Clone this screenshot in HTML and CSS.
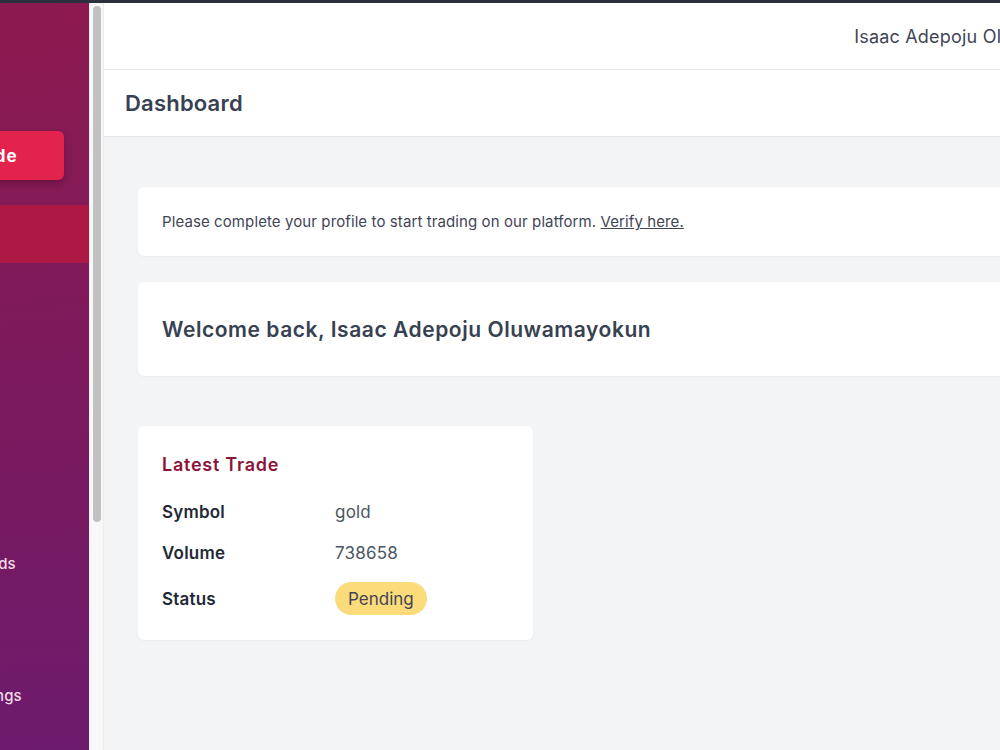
FILE: index.html
```html
<!DOCTYPE html>
<html lang="en">
<head>
<meta charset="utf-8">
<title>Dashboard</title>
<link rel="stylesheet" href="styles.css">
</head>
<body>
<div class="topline"></div>
<div class="app">
  <aside class="sidebar">
    <div class="sidebar-inner">
      <div class="brand-space"></div>
      <div class="trade-btn">Place Trade</div>
      <nav class="nav">
        <div class="nav-item active"></div>
        <div class="nav-item"></div>
        <div class="nav-item"></div>
        <div class="nav-item"></div>
        <div class="nav-item"></div>
        <div class="nav-item"></div>
        <div class="nav-item"></div>
        <div class="nav-item"><span>Withdraw Funds</span></div>
        <div class="nav-item"></div>
        <div class="nav-item"></div>
        <div class="nav-item"><span>Account Settings</span></div>
      </nav>
    </div>
  </aside>
  <div class="scrolltrack"><div class="thumb"></div></div>
  <main class="main">
    <header class="topbar"><span class="user">Isaac Adepoju Oluwamayokun</span></header>
    <div class="titlebar"><h1>Dashboard</h1></div>
    <div class="content">
      <div class="card notice">Please complete your profile to start trading on our platform. <a href="#">Verify here.</a></div>
      <div class="card welcome"><h2>Welcome back, Isaac Adepoju Oluwamayokun</h2></div>
      <div class="card trade">
        <h3>Latest Trade</h3>
        <div class="row"><span class="label">Symbol</span><span class="value">gold</span></div>
        <div class="row"><span class="label">Volume</span><span class="value">738658</span></div>
        <div class="row status"><span class="label">Status</span><span class="badge">Pending</span></div>
      </div>
    </div>
  </main>
</div>
</body>
</html>
```
FILE: styles.css
```css
* { box-sizing: border-box; }
html, body { margin: 0; padding: 0; }
body {
  width: 1000px;
  height: 750px;
  overflow: hidden;
  font-family: "Inter", "Open Sans", sans-serif;
  color: #374151;
  background: #f3f4f6;
}
.topline { height: 3px; background: #2c2f3e; }
.app { display: flex; height: 747px; }

.sidebar {
  flex: none;
  width: 89px;
  overflow: hidden;
  display: flex;
  justify-content: flex-end;
  background: linear-gradient(175deg, #8d1a4f 0%, #7c1a5d 50%, #6d1b6d 100%);
}
.sidebar-inner { flex: none; width: 250px; }
.brand-space { height: 128px; }
.trade-btn {
  margin: 0 25px 0 24px;
  height: 49px;
  display: flex;
  align-items: center;
  justify-content: center;
  background: #e2234d;
  color: #fff;
  font-weight: 700;
  font-size: 17px;
  letter-spacing: 1px;
  border-radius: 6px;
  box-shadow: 0 3px 6px rgba(60, 0, 30, 0.35);
}
.nav { margin-top: 25px; }
.nav-item {
  height: 44px;
  display: flex;
  align-items: center;
  padding-left: 60px;
  color: #f1d9e8;
  font-size: 15px;
  font-weight: 500;
  white-space: nowrap;
}
.nav-item.active { height: 58px; background: #ad1944; margin-bottom: 14px; }

.scrolltrack {
  flex: none;
  width: 15px;
  background: #f8f8f8;
  border-left: 1px solid #eee;
  border-right: 1px solid #ececec;
  padding: 3px 2px 0 3px;
}
.thumb { width: 8px; height: 516px; border-radius: 4px; background: #c1c1c1; }

.main { flex: none; width: 1140px; display: flex; flex-direction: column; }
.topbar {
  height: 67px;
  background: #fff;
  border-bottom: 1px solid #e5e7eb;
  display: flex;
  align-items: center;
  justify-content: flex-end;
  padding-right: 128px;
}
.user { font-size: 18px; letter-spacing: 0.2px; color: #3f4556; white-space: nowrap; }
.titlebar {
  height: 67px;
  background: #fff;
  border-bottom: 1px solid #e6e7ea;
  display: flex;
  align-items: center;
  padding-left: 21px;
}
.titlebar h1 { margin: 0; font-size: 22px; font-weight: 600; color: #374151; letter-spacing: 0.2px; }

.content { padding: 50px 0 0 34px; display: flex; flex-direction: column; align-items: flex-start; }
.card { background: #fff; border-radius: 6px; box-shadow: 0 1px 2px rgba(0,0,0,0.04); }
.notice {
  width: 1000px;
  height: 69px;
  display: flex;
  align-items: center;
  padding-left: 24px;
  font-size: 15px;
  letter-spacing: 0.1px;
  color: #3f4556;
  white-space: pre;
}
.notice a { color: #3f4556; text-decoration: underline; }
.welcome {
  margin-top: 26px;
  width: 1000px;
  height: 94px;
  display: flex;
  align-items: center;
  padding-left: 24px;
}
.welcome h2 { margin: 0; font-size: 21px; letter-spacing: 0.55px; font-weight: 600; color: #374151; }
.trade {
  margin-top: 50px;
  width: 395px;
  height: 214px;
  padding: 27px 24px 0;
}
.trade h3 { margin: 0 0 14px; font-size: 18px; letter-spacing: 0.75px; font-weight: 600; color: #8b1538; line-height: 24px; }
.row { display: flex; align-items: center; height: 41px; font-size: 17px; }
.row.status { height: 51px; }
.label { width: 173px; font-weight: 600; color: #1f2937; letter-spacing: 0.2px; }
.value { color: #4b5563; letter-spacing: 0.2px; }
.badge {
  background: #fcdb7b;
  color: #3f4556;
  border-radius: 999px;
  padding: 0 13px;
  height: 33px;
  display: inline-flex;
  align-items: center;
  font-size: 17px;
}
```
